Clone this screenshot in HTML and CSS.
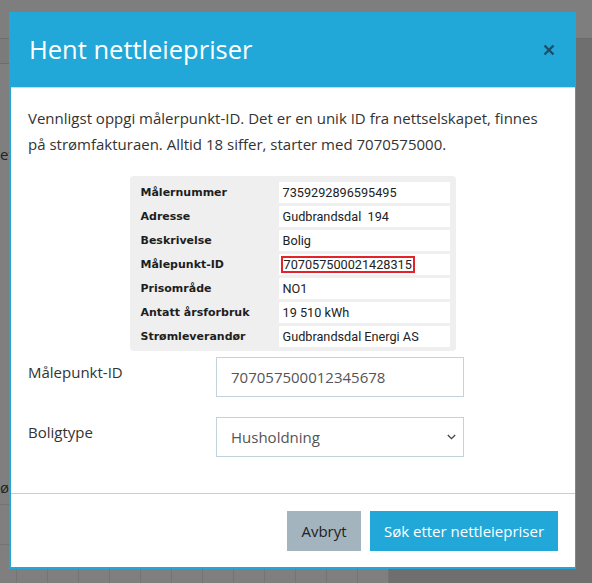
FILE: index.html
```html
<!DOCTYPE html>
<html lang="no">
<head>
<meta charset="utf-8">
<title>Hent nettleiepriser</title>
<link rel="stylesheet" href="styles.css">
</head>
<body>
<div class="page">
  <div class="page-top"></div>
  <div class="page-row">
    <div class="page-main">
      <div class="page-nav"></div>
      <div class="page-text page-text-1">et</div>
      <div class="page-text page-text-2">ør</div>
      <div class="page-line"></div>
      <div class="page-grid">
        <span class="cell"></span><span class="cell"></span><span class="cell"></span><span class="cell"></span><span class="cell"></span><span class="cell"></span><span class="cell"></span><span class="cell"></span><span class="cell"></span><span class="cell"></span><span class="cell"></span><span class="cell"></span>
      </div>
    </div>
    <div class="page-aside"></div>
  </div>
</div>

<div class="modal">
  <div class="modal-header">
    <h1 class="modal-title">Hent nettleiepriser</h1>
    <button class="close" type="button" aria-label="Lukk">
      <svg width="12" height="12" viewBox="0 0 12 12"><path d="M1.5 1.5 L10.5 10.5 M10.5 1.5 L1.5 10.5" stroke="#1d4e66" stroke-width="2.4" stroke-linecap="butt"/></svg>
    </button>
  </div>
  <div class="modal-body">
    <p class="intro">Vennligst oppgi målerpunkt-ID. Det er en unik ID fra nettselskapet, finnes på strømfakturaen. Alltid 18 siffer, starter med 7070575000.</p>
    <div class="meter-card">
      <div class="meter-row"><span class="meter-label">Målernummer</span><span class="meter-value">7359292896595495</span></div>
      <div class="meter-row"><span class="meter-label">Adresse</span><span class="meter-value">Gudbrandsdal&nbsp;&nbsp;194</span></div>
      <div class="meter-row"><span class="meter-label">Beskrivelse</span><span class="meter-value">Bolig</span></div>
      <div class="meter-row"><span class="meter-label">Målepunkt-ID</span><span class="meter-value"><span class="highlight">707057500021428315</span></span></div>
      <div class="meter-row"><span class="meter-label">Prisområde</span><span class="meter-value">NO1</span></div>
      <div class="meter-row"><span class="meter-label">Antatt årsforbruk</span><span class="meter-value">19 510 kWh</span></div>
      <div class="meter-row"><span class="meter-label">Strømleverandør</span><span class="meter-value">Gudbrandsdal Energi AS</span></div>
    </div>
    <div class="form-row">
      <label class="form-label" for="mpid">Målepunkt-ID</label>
      <input class="form-control" id="mpid" type="text" value="707057500012345678">
    </div>
    <div class="form-row">
      <label class="form-label">Boligtype</label>
      <div class="form-control select">
        <span>Husholdning</span>
        <svg class="chevron" width="9" height="6" viewBox="0 0 9 6"><path d="M0.8 1 L4.5 4.7 L8.2 1" fill="none" stroke="#444" stroke-width="1.3"/></svg>
      </div>
    </div>
  </div>
  <div class="modal-footer">
    <button class="btn btn-cancel" type="button">Avbryt</button>
    <button class="btn btn-primary" type="button">Søk etter nettleiepriser</button>
  </div>
</div>
</body>
</html>
```
FILE: styles.css
```css
html, body {
  margin: 0;
  padding: 0;
}
body {
  width: 592px;
  height: 583px;
  overflow: hidden;
  background: #7f7f7f;
  font-family: "Open Sans", "Noto Sans", "Liberation Sans", sans-serif;
  color: #333;
}

/* dimmed page behind the modal */
.page {
  display: flex;
  flex-direction: column;
  height: 583px;
}
.page-top {
  height: 38px;
  background: #7e7e7e;
  border-bottom: 1px solid #6c6c6c;
  flex: none;
}
.page-row {
  display: flex;
  flex: 1;
}
.page-main {
  width: 576px;
  display: flex;
  flex-direction: column;
}
.page-aside {
  flex: 1;
  background: #6f6f6f;
}
.page-nav {
  height: 24px;
  background: #7b7b7b;
  border-bottom: 1px solid #6c6c6c;
}
.page-text {
  font-size: 15px;
  line-height: 20px;
  color: #222;
  margin-left: 0;
}
.page-text-1 {
  margin-top: 80px;
}
.page-text-2 {
  margin-top: 313px;
}
.page-line {
  margin-top: 7px;
  height: 39px;
  border-top: 1px solid #737373;
  border-bottom: 1px solid #737373;
}
.page-grid {
  flex: 1;
  display: flex;
  padding-left: 16px;
  background: linear-gradient(#7f7f7f, #7f7f7f) no-repeat 0 0 / 388px 100%, #6f6f6f;
}
.page-grid .cell {
  width: 30px;
  border-left: 1px solid #747474;
}
.page-grid .cell:last-child {
  border-right: 1px solid #747474;
}

/* modal */
.modal {
  position: absolute;
  left: 9px;
  top: 12px;
  width: 567px;
  box-sizing: border-box;
  background: #fff;
  border: 2px solid #21a8d8;
  border-top: 0;
  border-right-width: 1px;
}
.modal-header {
  height: 76px;
  box-sizing: border-box;
  background: #21a8d8;
  border-bottom: 1px solid #c9dbe3;
  display: flex;
  align-items: center;
  justify-content: space-between;
  padding: 0 20px 2px 18px;
}
.modal-title {
  margin: 0;
  font-weight: 400;
  font-size: 25.5px;
  color: #fff;
}
.close {
  border: 0;
  background: none;
  padding: 0;
  width: 12px;
  height: 12px;
  display: flex;
  margin-top: 2px;
}

.modal-body {
  padding: 17px 18px 36px 17px;
  border-bottom: 1px solid #c5ced6;
}
.intro {
  margin: 0;
  max-width: 520px;
  font-size: 15px;
  line-height: 26px;
  color: #333;
}

.meter-card {
  width: 326px;
  box-sizing: border-box;
  margin: 19px auto 6px;
  background: #efefef;
  border-radius: 4px;
  padding: 6px 6px 4px 11px;
  display: flex;
  flex-direction: column;
  gap: 3px;
}
.meter-row {
  display: flex;
  height: 21px;
  align-items: stretch;
}
.meter-label {
  width: 138px;
  flex: none;
  font-family: "DejaVu Sans", sans-serif;
  font-weight: 700;
  font-size: 11px;
  color: #1e1e1e;
  display: flex;
  align-items: center;
}
.meter-value {
  flex: 1;
  background: #fff;
  font-family: Roboto, "Liberation Sans", sans-serif;
  font-size: 12.7px;
  color: #222;
  display: flex;
  align-items: center;
  padding-left: 4px;
}
.highlight {
  border: 2px solid #e3222a;
  margin-left: -2px;
  padding: 0 1px;
  line-height: 13px;
}

.form-row {
  display: grid;
  grid-template-columns: 188px 248px;
  margin-top: 20px;
}
.meter-card + .form-row {
  margin-top: 0;
}
.form-label {
  font-size: 15px;
  color: #333;
  padding-top: 5px;
}
.form-control {
  box-sizing: border-box;
  height: 40px;
  width: 248px;
  border: 1px solid #c3d3db;
  border-radius: 0;
  padding: 0 14px;
  font-family: inherit;
  font-size: 15px;
  color: #555;
  background: #fff;
  outline: none;
}
.select {
  display: flex;
  align-items: center;
  justify-content: space-between;
  padding-right: 7px;
}

.modal-footer {
  display: flex;
  justify-content: flex-end;
  gap: 9px;
  padding: 17px 17px 16px;
}
.btn {
  height: 40px;
  border: 0;
  border-radius: 0;
  font-family: inherit;
  font-size: 15px;
  padding: 0;
}
.btn-cancel {
  width: 74px;
  background: #a3b4bf;
  color: #222;
}
.btn-primary {
  width: 188px;
  background: #21a8d8;
  color: #fff;
}
```
